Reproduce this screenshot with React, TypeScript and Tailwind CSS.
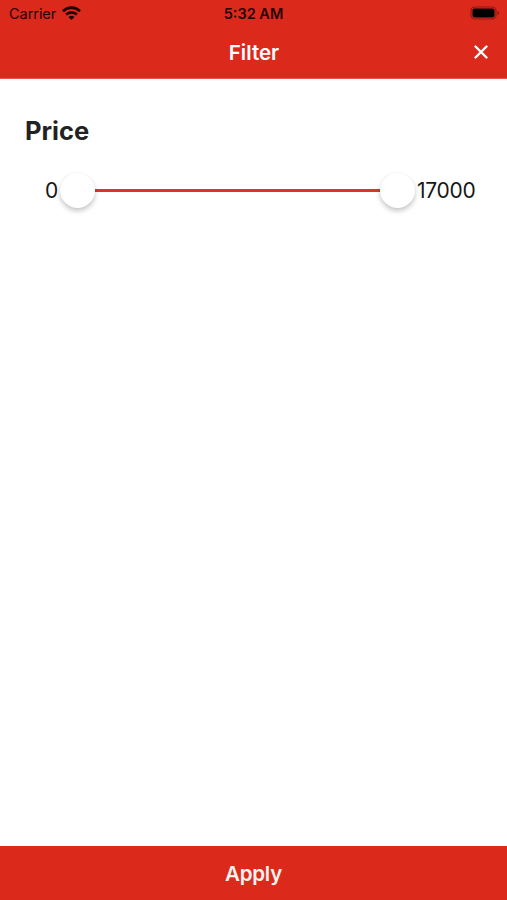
const price = { min: 0, max: 17000 }

const WifiIcon = () => (
  <svg className="ml-[5.5px] h-[15px] w-[19px]" viewBox="0 0 19 15" fill="none" stroke="#1c0302" strokeWidth="2.7">
    <path d="M1 5.2C5.8.5 13.2.5 18 5.2" />
    <path d="M4.1 8.5c3.1-2.9 7.7-2.9 10.8 0" />
    <path d="M6.5 11.1a4.4 4.4 0 0 1 6 0L9.5 14Z" fill="#1c0302" stroke="none" />
  </svg>
)

const BatteryIcon = () => (
  <svg className="h-[14px] w-[30px]" viewBox="0 0 30 14" fill="none">
    <rect x="1" y="1" width="25" height="12" rx="3.6" stroke="#8e1a11" strokeWidth="1.2" />
    <rect x="2.5" y="2.5" width="22" height="9" rx="2" fill="#000" />
    <path d="M27.5 5c2 .6 2 3.4 0 4Z" fill="#8e1a11" />
  </svg>
)

const StatusBar = () => (
  <div className="grid h-[26px] grid-cols-3 items-center text-[#260403]">
    <div className="flex items-center pl-[9px]">
      <span className="pt-px text-[14.5px] tracking-[-0.05px]">Carrier</span>
      <WifiIcon />
    </div>
    <span className="pt-px text-center text-[14.5px] font-semibold">5:32 AM</span>
    <div className="flex justify-end pr-[7px]">
      <BatteryIcon />
    </div>
  </div>
)

const Thumb = () => (
  <div className="z-10 size-[35px] shrink-0 rounded-full bg-white shadow-[0_3px_5px_rgba(0,0,0,0.22),0_0_2px_rgba(0,0,0,0.05)]" />
)

const PriceSlider = () => (
  <div className="mt-[23px] flex h-[40px] items-center pl-[45px] text-[21px] text-[#171717]">
    <span className="w-[15px] pt-px">{price.min}</span>
    <div className="flex w-[355px] items-center">
      <Thumb />
      <div className="h-[3px] flex-1 bg-[#d9352b]" />
      <Thumb />
    </div>
    <span className="ml-[2px] pt-px tracking-[-0.3px]">{price.max}</span>
  </div>
)

const App = () => {
  return (
    <div className="flex h-screen flex-col bg-white font-['Inter',sans-serif]">
      <header className="h-[79px] border-b border-[#e5594e] bg-[#db291c]">
        <StatusBar />
        <div className="grid h-[52px] grid-cols-3 items-center text-white">
          <h1 className="col-start-2 pt-[3px] pl-px text-center text-[20.5px] font-semibold">Filter</h1>
          <button aria-label="Close" className="mr-[19px] justify-self-end">
            <svg className="size-[14px]" viewBox="0 0 14 14" fill="none" stroke="#fff" strokeWidth="2.4" strokeLinecap="round">
              <path d="m1.5 1.5 11 11M12.5 1.5l-11 11" />
            </svg>
          </button>
        </div>
      </header>

      <main className="flex-1 pt-[36px]">
        <h2 className="pl-[25px] text-[25.5px] leading-[32px] font-bold text-[#222]">Price</h2>
        <PriceSlider />
      </main>

      <button className="h-[54px] bg-[#db291c] pt-[2px] text-[20.5px] font-semibold tracking-[-0.2px] text-[#fff3f0]">
        Apply
      </button>
    </div>
  )
}

export default App
